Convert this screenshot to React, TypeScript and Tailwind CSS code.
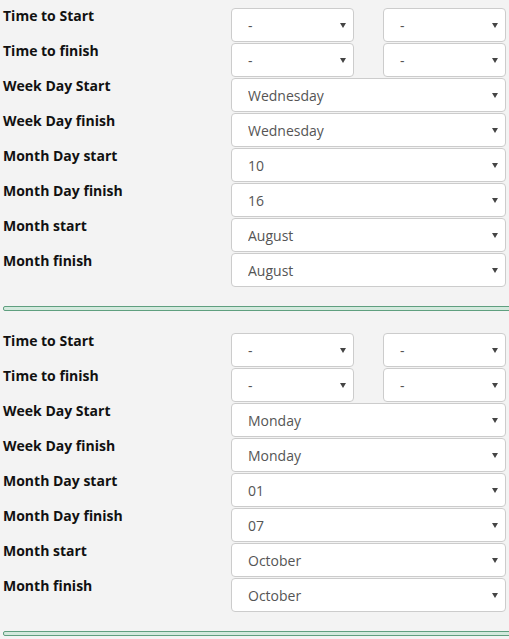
import React from 'react';

type Row = { label: string; values: string[] };

const schedules: Row[][] = [
  [
    { label: 'Time to Start', values: ['-', '-'] },
    { label: 'Time to finish', values: ['-', '-'] },
    { label: 'Week Day Start', values: ['Wednesday'] },
    { label: 'Week Day finish', values: ['Wednesday'] },
    { label: 'Month Day start', values: ['10'] },
    { label: 'Month Day finish', values: ['16'] },
    { label: 'Month start', values: ['August'] },
    { label: 'Month finish', values: ['August'] },
  ],
  [
    { label: 'Time to Start', values: ['-', '-'] },
    { label: 'Time to finish', values: ['-', '-'] },
    { label: 'Week Day Start', values: ['Monday'] },
    { label: 'Week Day finish', values: ['Monday'] },
    { label: 'Month Day start', values: ['01'] },
    { label: 'Month Day finish', values: ['07'] },
    { label: 'Month start', values: ['October'] },
    { label: 'Month finish', values: ['October'] },
  ],
];

function Select({ value, className }: { value: string; className?: string }) {
  return (
    <div className={`relative h-[34px] ${className ?? ''}`}>
      <select
        defaultValue={value}
        className="h-full w-full appearance-none rounded-[4px] border border-[#cccccc] bg-white pl-4 pr-6 text-[14px] text-[#555555] outline-none"
      >
        <option>{value}</option>
      </select>
      {/* caret */}
      <svg
        className="pointer-events-none absolute right-[8px] top-[15px]"
        width="6"
        height="5"
        viewBox="0 0 6 5"
      >
        <path d="M0 0h6L3 5z" fill="#444444" />
      </svg>
    </div>
  );
}

function Divider() {
  return (
    <div className="my-5 ml-[3px] mr-[-12px] h-[5px] rounded-l-[2px] border border-[#5f9f7f] bg-[#d3e9dd]" />
  );
}

function Schedule({ rows }: { rows: Row[] }) {
  return (
    <div className="flex flex-col">
      {rows.map((row, i) => (
        <div key={i} className="flex h-[35px] items-start">
          <div className="w-[231px] shrink-0 pl-[3px] text-[14px] font-bold leading-5 text-[#111111]">
            {row.label}
          </div>
          {row.values.length === 2 ? (
            <div className="mt-[2px] flex w-[275px] justify-between">
              <Select value={row.values[0]} className="w-[123px]" />
              <Select value={row.values[1]} className="w-[123px]" />
            </div>
          ) : (
            <Select value={row.values[0]} className="mt-[2px] w-[275px]" />
          )}
        </div>
      ))}
    </div>
  );
}

export default function App() {
  return (
    <div
      className="h-[639px] w-full overflow-hidden bg-[#f3f3f3] pt-[6px]"
      style={{ fontFamily: '"Open Sans", "Liberation Sans", sans-serif' }}
    >
      {schedules.map((rows, i) => (
        <div key={i}>
          <Schedule rows={rows} />
          <Divider />
        </div>
      ))}
    </div>
  );
}
